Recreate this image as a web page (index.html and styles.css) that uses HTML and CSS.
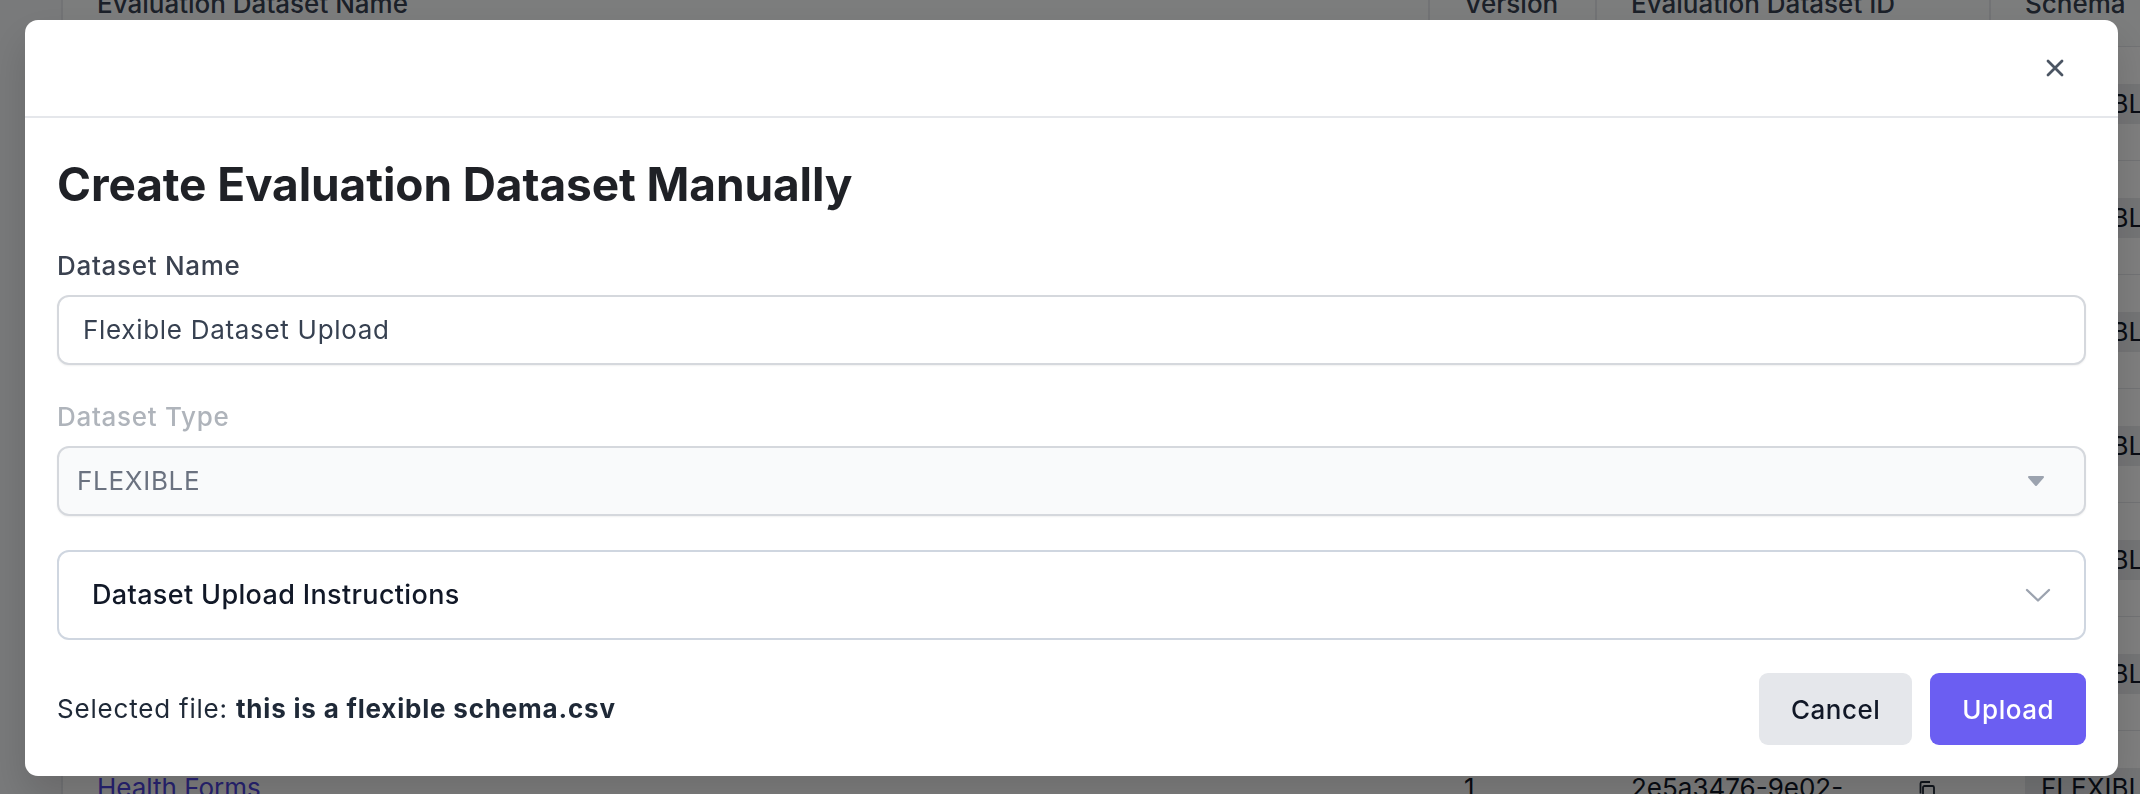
FILE: index.html
```html
<!DOCTYPE html>
<html lang="en">
<head>
<meta charset="utf-8">
<title>Create Evaluation Dataset Manually</title>
<link rel="stylesheet" href="styles.css">
</head>
<body>
<div class="page">
  <div class="grid">
    <div class="th">Evaluation Dataset Name</div>
    <div class="th">Version</div>
    <div class="th">Evaluation Dataset ID</div>
    <div class="th">Schema</div>

    <div class="td name">Invoice Extraction</div><div class="td">1</div><div class="td id">7a1c2d90-4b3e-<br>41f0-9a2c</div><div class="td"><span class="badge">FLEXIBLE</span></div>
    <div class="td name">Receipt Parsing</div><div class="td">2</div><div class="td id">91b4e7c2-0d5a-<br>4c8e-b7f1</div><div class="td"><span class="badge">FLEXIBLE</span></div>
    <div class="td name">Contract Review</div><div class="td">1</div><div class="td id">c3d8a1f4-77e2-<br>4a19-8b0d</div><div class="td"><span class="badge">FLEXIBLE</span></div>
    <div class="td name">Support Tickets</div><div class="td">3</div><div class="td id">5f0e9b21-3c6d-<br>48a7-a2e4</div><div class="td"><span class="badge">FLEXIBLE</span></div>
    <div class="td name">Medical Notes</div><div class="td">1</div><div class="td id">e84a6c37-b915-<br>4d02-9f6a</div><div class="td"><span class="badge">FLEXIBLE</span></div>
    <div class="td name">Insurance Claims</div><div class="td">2</div><div class="td id">0b7d3e58-a2c1-<br>4f96-8e3b</div><div class="td"><span class="badge">FLEXIBLE</span></div>
    <div class="td name"><a class="link">Health Forms</a></div><div class="td">1</div><div class="td id"><span class="idtext">2e5a3476-9e02-<br>4b6c-a1d7</span><svg class="copy" viewBox="0 0 20 20" width="20" height="20"><rect x="6" y="6" width="11" height="12" rx="1.5" fill="none" stroke="#1f2937" stroke-width="1.8"/><path d="M3.5 13.5V3.5a1.5 1.5 0 0 1 1.5-1.5h8" fill="none" stroke="#1f2937" stroke-width="1.8"/></svg></div><div class="td"><span class="badge">FLEXIBLE</span></div>
  </div>
</div>

<div class="overlay">
  <div class="modal">
    <div class="modal-header">
      <button class="close" aria-label="Close">
        <svg viewBox="0 0 18 18" width="18" height="18"><path d="M2 2L16 16M16 2L2 16" stroke="#4b5563" stroke-width="2.8" stroke-linecap="round"/></svg>
      </button>
    </div>
    <div class="modal-body">
      <h2 class="title">Create Evaluation Dataset Manually</h2>

      <div class="field first">
        <div class="label">Dataset Name</div>
        <div class="input">Flexible Dataset Upload</div>
      </div>

      <div class="field">
        <div class="label muted">Dataset Type</div>
        <div class="select">
          <span>FLEXIBLE</span>
          <svg viewBox="0 0 20 12" width="20" height="12"><path d="M3 2H17L10 10Z" fill="#9ca3af" stroke="#9ca3af" stroke-width="2" stroke-linejoin="round"/></svg>
        </div>
      </div>

      <div class="accordion">
        <span>Dataset Upload Instructions</span>
        <svg viewBox="0 0 26 15" width="26" height="15"><path d="M2 2L13 12.5L24 2" fill="none" stroke="#9ca3af" stroke-width="2.4" stroke-linecap="round" stroke-linejoin="round"/></svg>
      </div>

      <div class="footer">
        <p class="selected">Selected file: <strong>this is a flexible schema.csv</strong></p>
        <div class="actions">
          <button class="btn cancel">Cancel</button>
          <button class="btn upload">Upload</button>
        </div>
      </div>
    </div>
  </div>
</div>
</body>
</html>
```
FILE: styles.css
```css
* { box-sizing: border-box; }

html, body {
  margin: 0;
  padding: 0;
  height: 100%;
  overflow: hidden;
}

body {
  font-family: Inter, "Noto Sans", "Liberation Sans", sans-serif;
  background: #f3f4f6;
  color: #111827;
}

/* background table */
.page {
  margin-top: -40px;
  margin-left: 61px;
  background: #ffffff;
  border-left: 2px solid #e5e7eb;
  width: 2200px;
}

.grid {
  display: grid;
  grid-template-columns: 1367px 167px 394px 272px;
}

.th {
  height: 87px;
  display: flex;
  align-items: center;
  padding: 0 34px;
  font-size: 26px;
  font-weight: 500;
  color: #374151;
  background: #f9fafb;
  border-right: 2px solid #e5e7eb;
  border-bottom: 1px solid #e5e7eb;
  white-space: nowrap;
}

.td {
  height: 114px;
  padding: 39px 34px 0;
  font-size: 26px;
  line-height: 36px;
  color: #111827;
  border-bottom: 1px solid #e5e7eb;
  white-space: nowrap;
  display: flex;
  align-items: flex-start;
}

.td.id {
  justify-content: space-between;
  padding-right: 54px;
}

.link { color: #4f46e5; }

.copy { margin-top: 10px; }

.badge {
  display: inline-flex;
  align-items: center;
  height: 40px;
  margin-top: -2px;
  padding: 0 16px;
  background: #e9eaed;
  border-radius: 6px;
}

/* modal */
.overlay {
  position: fixed;
  inset: 0;
  background: rgba(0, 0, 0, 0.5);
  padding: 20px 22px 0 25px;
}

.modal {
  background: #ffffff;
  border-radius: 13px;
  box-shadow: 0 20px 40px rgba(0, 0, 0, 0.15);
}

.modal-header {
  height: 98px;
  border-bottom: 2px solid #e5e7eb;
  display: flex;
  justify-content: flex-end;
  align-items: center;
  padding-right: 54px;
}

.close {
  background: none;
  border: 0;
  padding: 0;
  width: 18px;
  height: 18px;
  display: flex;
  cursor: pointer;
}

.modal-body {
  padding: 38px 32px 31px;
}

.title {
  margin: 0;
  font-size: 46px;
  line-height: 56px;
  font-weight: 700;
  color: #1f2126;
  letter-spacing: -0.1px;
}

.field { margin-top: 34px; }
.field.first { margin-top: 36px; }

.label {
  font-size: 26px;
  line-height: 36px;
  font-weight: 500;
  color: #3b4250;
  margin-bottom: 11px;
  letter-spacing: 0.7px;
}

.label.muted { color: #afb4bb; }

.input, .select {
  height: 70px;
  border: 2px solid #d5d8dd;
  border-radius: 12px;
  box-shadow: 0 1px 2px rgba(0, 0, 0, 0.06);
  display: flex;
  align-items: center;
  font-size: 26px;
  line-height: 36px;
  letter-spacing: 0.7px;
}

.input {
  padding: 0 24px;
  color: #374151;
  background: #ffffff;
}

.select {
  padding: 0 38px 0 18px;
  background: #f9fafb;
  color: #6b7280;
  justify-content: space-between;
}

.accordion {
  margin-top: 34px;
  height: 90px;
  border: 2px solid #cfd6e0;
  border-radius: 12px;
  padding: 0 33px 0 33px;
  display: flex;
  align-items: center;
  justify-content: space-between;
  font-size: 27px;
  line-height: 36px;
  font-weight: 500;
  color: #111827;
  letter-spacing: 0.35px;
}

.footer {
  margin-top: 33px;
  display: flex;
  align-items: center;
  justify-content: space-between;
}

.selected {
  margin: 0;
  font-size: 26px;
  line-height: 36px;
  color: #1f2937;
  letter-spacing: 0.8px;
}

.selected strong { font-weight: 700; }

.actions {
  display: flex;
  gap: 18px;
}

.btn {
  height: 72px;
  padding: 0 32px;
  border: 0;
  border-radius: 9px;
  font-family: inherit;
  font-size: 26px;
  font-weight: 500;
  letter-spacing: 0.5px;
  cursor: pointer;
}

.cancel {
  background: #e5e7eb;
  color: #111827;
}

.upload {
  background: #6b5ef2;
  color: #ffffff;
}
```
